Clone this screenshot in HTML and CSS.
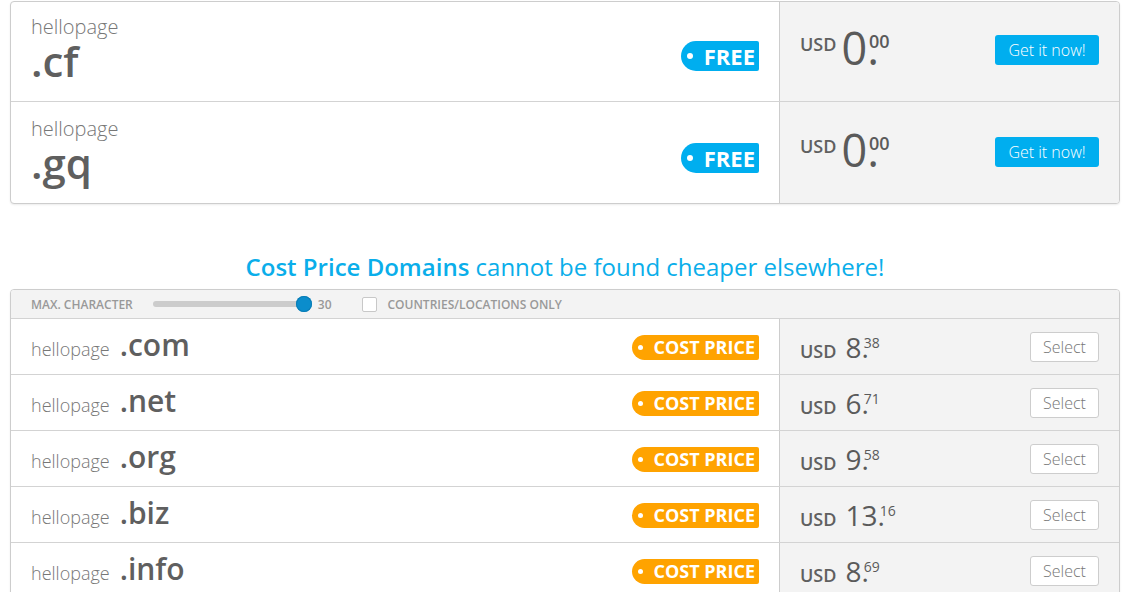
FILE: index.html
```html
<!DOCTYPE html>
<html lang="en">
<head>
<meta charset="utf-8">
<title>Domains</title>
<link rel="stylesheet" href="styles.css">
</head>
<body>
<div class="page">
  <div class="card">
    <div class="row row-lg">
      <div class="domain domain-lg">
        <div class="name-stack">
          <div class="sld-lg">hellopage</div>
          <div class="tld-lg">.cf</div>
        </div>
        <span class="tag tag-free"><span class="tag-dot"></span>FREE</span>
      </div>
      <div class="offer offer-lg">
        <div class="price price-lg"><span class="cur">USD</span><span class="int">0.</span><span class="dec">00</span></div>
        <button class="btn btn-primary">Get it now!</button>
      </div>
    </div>
    <div class="row row-lg">
      <div class="domain domain-lg">
        <div class="name-stack">
          <div class="sld-lg">hellopage</div>
          <div class="tld-lg">.gq</div>
        </div>
        <span class="tag tag-free"><span class="tag-dot"></span>FREE</span>
      </div>
      <div class="offer offer-lg">
        <div class="price price-lg"><span class="cur">USD</span><span class="int">0.</span><span class="dec">00</span></div>
        <button class="btn btn-primary">Get it now!</button>
      </div>
    </div>
  </div>

  <h2 class="promo"><strong>Cost Price Domains</strong> cannot be found cheaper elsewhere!</h2>

  <div class="card">
    <div class="filters">
      <span class="filter-label">Max. Character</span>
      <div class="slider"><span class="track"></span><span class="knob"></span></div>
      <span class="slider-value">30</span>
      <span class="checkbox"></span>
      <span class="filter-label check-label">Countries/Locations only</span>
    </div>
    <div class="row row-sm">
      <div class="domain domain-sm">
        <div class="name-line"><span class="sld-sm">hellopage</span><span class="tld-sm">.com</span></div>
        <span class="tag tag-cost"><span class="tag-dot"></span>COST PRICE</span>
      </div>
      <div class="offer offer-sm">
        <div class="price price-sm"><span class="cur">USD</span><span class="int">8.</span><span class="dec">38</span></div>
        <button class="btn btn-select">Select</button>
      </div>
    </div>
    <div class="row row-sm">
      <div class="domain domain-sm">
        <div class="name-line"><span class="sld-sm">hellopage</span><span class="tld-sm">.net</span></div>
        <span class="tag tag-cost"><span class="tag-dot"></span>COST PRICE</span>
      </div>
      <div class="offer offer-sm">
        <div class="price price-sm"><span class="cur">USD</span><span class="int">6.</span><span class="dec">71</span></div>
        <button class="btn btn-select">Select</button>
      </div>
    </div>
    <div class="row row-sm">
      <div class="domain domain-sm">
        <div class="name-line"><span class="sld-sm">hellopage</span><span class="tld-sm">.org</span></div>
        <span class="tag tag-cost"><span class="tag-dot"></span>COST PRICE</span>
      </div>
      <div class="offer offer-sm">
        <div class="price price-sm"><span class="cur">USD</span><span class="int">9.</span><span class="dec">58</span></div>
        <button class="btn btn-select">Select</button>
      </div>
    </div>
    <div class="row row-sm">
      <div class="domain domain-sm">
        <div class="name-line"><span class="sld-sm">hellopage</span><span class="tld-sm">.biz</span></div>
        <span class="tag tag-cost"><span class="tag-dot"></span>COST PRICE</span>
      </div>
      <div class="offer offer-sm">
        <div class="price price-sm"><span class="cur">USD</span><span class="int">13.</span><span class="dec">16</span></div>
        <button class="btn btn-select">Select</button>
      </div>
    </div>
    <div class="row row-sm">
      <div class="domain domain-sm">
        <div class="name-line"><span class="sld-sm">hellopage</span><span class="tld-sm">.info</span></div>
        <span class="tag tag-cost"><span class="tag-dot"></span>COST PRICE</span>
      </div>
      <div class="offer offer-sm">
        <div class="price price-sm"><span class="cur">USD</span><span class="int">8.</span><span class="dec">69</span></div>
        <button class="btn btn-select">Select</button>
      </div>
    </div>
  </div>
</div>
</body>
</html>
```

FILE: styles.css
```css
html, body {
  margin: 0;
  padding: 0;
  overflow: hidden;
}
body {
  font-family: "Open Sans", "Liberation Sans", sans-serif;
  color: #666;
  background: #fff;
}
.page {
  padding: 1px 11px 0 10px;
}
.card {
  border: 1px solid #cdcdcd;
  border-radius: 4px;
  box-shadow: 0 1px 2px rgba(0, 0, 0, 0.08);
  overflow: hidden;
  background: #fff;
}
.row {
  display: grid;
  grid-template-columns: 768px 1fr;
  border-bottom: 1px solid #d3d3d3;
}
.row:last-child {
  border-bottom: 0;
}
.row-lg {
  height: 99px;
}
.row-lg + .row-lg {
  height: 101px;
}
.row-sm {
  height: 55px;
}

/* left column */
.domain {
  display: flex;
  justify-content: space-between;
  padding: 0 20px;
}
.domain-lg {
  align-items: flex-start;
  padding-top: 13px;
}
.row-lg + .row-lg .domain-lg {
  padding-top: 15px;
}
.domain-sm {
  align-items: center;
}
.sld-lg {
  font-size: 20px;
  font-weight: 300;
  line-height: 24px;
  color: #777;
}
.tld-lg {
  font-size: 42px;
  font-weight: 600;
  line-height: 42px;
  margin-top: 1px;
  color: #5f5f5f;
}
.name-line {
  line-height: 36px;
  margin-top: 1px;
  white-space: nowrap;
}
.sld-sm {
  font-size: 18px;
  font-weight: 300;
  color: #777;
  margin-right: 10px;
}
.tld-sm {
  font-size: 30px;
  font-weight: 600;
  color: #5f5f5f;
}

/* tags */
.tag {
  display: inline-flex;
  align-items: center;
  color: #fff;
  font-weight: 700;
  white-space: nowrap;
}
.tag-dot {
  display: inline-block;
  border-radius: 50%;
  background: #fff;
  flex: none;
}
.tag-free {
  background: #00aeef;
  height: 30px;
  font-size: 22px;
  padding: 0 4px 0 6px;
  border-radius: 15px 2px 2px 15px;
  margin-top: 26px;
}
.tag-free .tag-dot {
  width: 6px;
  height: 6px;
  margin-right: 11px;
}
.tag-cost {
  background: #ffa300;
  height: 25px;
  font-size: 18px;
  padding: 0 4px 0 6px;
  border-radius: 12.5px 2px 2px 12.5px;
  margin-top: 1px;
}
.tag-cost .tag-dot {
  width: 5px;
  height: 5px;
  margin-right: 10px;
}

/* right column */
.offer {
  background: #f3f3f3;
  border-left: 1px solid #cdcdcd;
  display: flex;
  justify-content: space-between;
  padding: 0 20px;
}
.offer-lg {
  align-items: flex-start;
  padding-top: 23px;
}
.row-lg + .row-lg .offer-lg {
  padding-top: 25px;
}
.offer-sm {
  align-items: center;
}
.price {
  white-space: nowrap;
  font-size: 18px;
  line-height: 1;
  color: #5a5a5a;
}
.price span {
  line-height: 1;
}
.price .cur {
  font-size: 18px;
  font-weight: 600;
  color: #606060;
}
.price-lg .cur {
  vertical-align: 14px;
  margin-right: 5px;
}
.price-lg .int {
  font-size: 45px;
  font-weight: 400;
}
.price-lg .dec {
  font-size: 18px;
  font-weight: 600;
  vertical-align: 17px;
  margin-left: -10px;
}
.price-sm {
  margin-top: 1px;
}
.price-sm .cur {
  margin-right: 9px;
}
.price-sm .int {
  font-size: 28px;
  font-weight: 400;
}
.price-sm .dec {
  font-size: 14px;
  font-weight: 400;
  vertical-align: 10px;
  margin-left: -5px;
}

/* buttons */
.btn {
  font-family: inherit;
  font-size: 16px;
  font-weight: 300;
  height: 30px;
  padding: 0;
  border-radius: 3px;
  cursor: pointer;
}
.btn-primary {
  background: #00aeef;
  color: #fff;
  border: 0;
  width: 104px;
  margin-top: 10px;
}
.btn-select {
  background: #fff;
  color: #777;
  border: 1px solid #cdcdcd;
  width: 69px;
}

/* heading */
.promo {
  margin: 47px 0 6px;
  font-size: 24px;
  font-weight: 400;
  line-height: 32px;
  text-align: center;
  color: #0aaeea;
}
.promo strong {
  font-weight: 600;
}

/* filter bar */
.filters {
  display: flex;
  align-items: center;
  height: 28px;
  background: #f3f3f3;
  border-bottom: 1px solid #d3d3d3;
  padding-left: 20px;
  font-size: 12px;
  font-weight: 600;
  color: #999;
}
.filter-label {
  text-transform: uppercase;
  white-space: nowrap;
}
.slider {
  display: flex;
  align-items: center;
  margin-left: 20px;
  width: 159px;
}
.track {
  width: 151px;
  height: 6px;
  border-radius: 3px;
  background: #cccccc;
}
.knob {
  width: 16px;
  height: 16px;
  border-radius: 50%;
  background: #0b8dcc;
  box-shadow: inset 0 0 0 1px #0a7db5;
  margin-left: -8px;
  flex: none;
}
.slider-value {
  margin-left: 6px;
}
.checkbox {
  width: 13px;
  height: 13px;
  margin-left: 30px;
  border: 1px solid #c8c8c8;
  border-radius: 2px;
  background: #fff;
  flex: none;
}
.check-label {
  margin-left: 11px;
}
```
